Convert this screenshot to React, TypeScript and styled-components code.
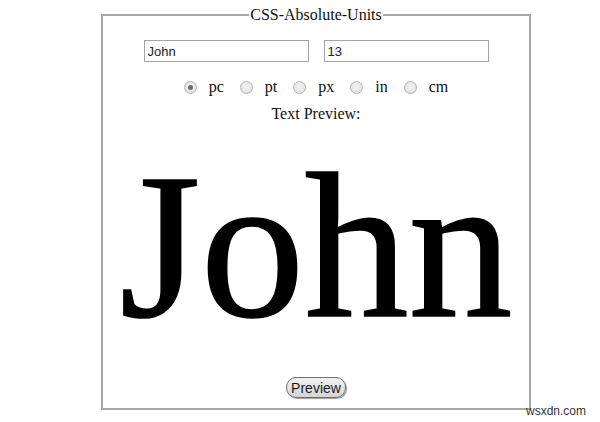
import React, {useState} from 'react';
import styled, {createGlobalStyle} from 'styled-components';

const GlobalStyle = createGlobalStyle`
  html, body {
    margin: 0;
    background: #ffffff;
  }
  body {
    font-family: "Liberation Serif", "Times New Roman", serif;
    color: #111111;
  }
`;

const Page = styled.div`
  width: 600px;
  height: 422px;
  position: relative;
  overflow: hidden;
  padding-top: 6px;
  box-sizing: border-box;
`;

const Frame = styled.fieldset`
  box-sizing: border-box;
  width: 430px;
  margin: 0 0 0 101px;
  padding: 0 0 10px;
  border: 2px solid #a7a7a7;
  min-inline-size: 0;
`;

const Legend = styled.legend`
  margin: 0 auto;
  padding: 0 1px;
  font-size: 16px;
  line-height: 18px;
  color: #111111;
`;

const Body = styled.div`
  display: flex;
  flex-direction: column;
  align-items: center;
  padding-top: 16px;
`;

const InputRow = styled.div`
  display: flex;
  gap: 15px;
`;

const TextField = styled.input`
  box-sizing: border-box;
  width: 165px;
  height: 22px;
  padding: 1px 3px;
  border: 1px solid #a4a4a4;
  font-family: "Liberation Sans", Arial, sans-serif;
  font-size: 13px;
  color: #222222;
  outline: none;
`;

const UnitRow = styled.div`
  display: flex;
  align-items: center;
  margin-top: 15px;
  height: 20px;
`;

const UnitOption = styled.label`
  display: flex;
  align-items: center;
  gap: 12px;
  margin-right: 16px;
  font-size: 16px;
  color: #111111;

  &:last-child {
    margin-right: 0;
  }
`;

const Radio = styled.input`
  appearance: none;
  margin: 0;
  width: 13px;
  height: 13px;
  border-radius: 50%;
  border: 1px solid #b4b4b4;
  background: radial-gradient(circle at 50% 40%, #f4f4f4 0%, #dcdcdc 100%);
  position: relative;

  &:checked::after {
    content: '';
    position: absolute;
    left: 3px;
    top: 3px;
    width: 5px;
    height: 5px;
    border-radius: 50%;
    background: #6a6a6a;
  }
`;

const Caption = styled.div`
  margin-top: 8px;
  font-size: 16px;
  line-height: 18px;
`;

const PreviewText = styled.div<{size: number}>`
  font-size: ${({size}) => size}px;
  line-height: 1.15;
  margin-top: 4px;
  color: #000000;
  white-space: nowrap;
  -webkit-text-stroke: 1.5px #000000;
`;

const PreviewButton = styled.button`
  margin-top: 11px;
  height: 21px;
  padding: 0 4px;
  border: 1px solid #6f6f6f;
  border-radius: 10px;
  background: linear-gradient(#f2f2f2, #d4d4d4);
  box-shadow: 1px 1px 1px #9a9a9a;
  font-family: "Liberation Sans", Arial, sans-serif;
  font-size: 14px;
  color: #1a1a1a;
`;

const Watermark = styled.div`
  position: absolute;
  right: 14px;
  bottom: 4px;
  font-family: "Liberation Sans", Arial, sans-serif;
  font-size: 12px;
  color: #333333;
`;

const units = ['pc', 'pt', 'px', 'in', 'cm'];
const pxPer: Record<string, number> = {pc: 16, pt: 16 / 12, px: 1, in: 96, cm: 96 / 2.54};

export default function App() {
  const [name, setName] = useState('John');
  const [amount, setAmount] = useState('13');
  const [unit, setUnit] = useState('pc');

  const size = (parseFloat(amount) || 0) * pxPer[unit];

  return (
    <Page>
      <GlobalStyle />
      <Frame>
        <Legend>CSS-Absolute-Units</Legend>
        <Body>
          <InputRow>
            <TextField value={name} onChange={(e) => setName(e.target.value)} />
            <TextField value={amount} onChange={(e) => setAmount(e.target.value)} />
          </InputRow>
          <UnitRow>
            {units.map((u) => (
              <UnitOption key={u}>
                <Radio type='radio' name='unit' checked={unit === u} onChange={() => setUnit(u)} />
                {u}
              </UnitOption>
            ))}
          </UnitRow>
          <Caption>Text Preview:</Caption>
          <PreviewText size={size}>{name}</PreviewText>
          <PreviewButton>Preview</PreviewButton>
        </Body>
      </Frame>
      <Watermark>wsxdn.com</Watermark>
    </Page>
  );
}
